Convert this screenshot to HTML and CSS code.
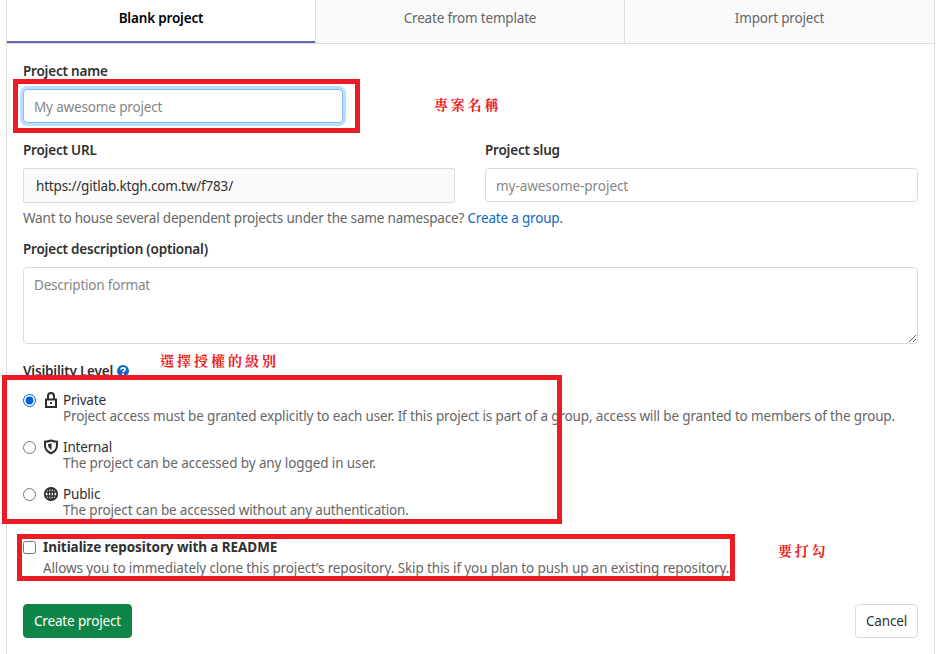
FILE: index.html
```html
<!DOCTYPE html>
<html lang="en">
<head>
<meta charset="utf-8">
<title>New project</title>
<link rel="stylesheet" href="styles.css">
</head>
<body>
<main class="panel">
  <nav class="tabs">
    <a class="tab active"><span class="t-blank">Blank project</span></a>
    <a class="tab"><span class="t-template">Create from template</span></a>
    <a class="tab"><span class="t-import">Import project</span></a>
  </nav>
  <form class="form">
    <label class="label" for="name">Project name</label>
    <input class="input name focused" id="name" type="text" placeholder="My awesome project">
    <div class="columns">
      <div>
        <label class="label">Project URL</label>
        <div class="input url"><span>https://gitlab.ktgh.com.tw/f783/</span></div>
      </div>
      <div>
        <label class="label" for="slug">Project slug</label>
        <input class="input slug" id="slug" type="text" placeholder="my-awesome-project">
      </div>
    </div>
    <p class="help"><span>Want to house several dependent projects under the same namespace? <a class="link">Create a group.</a></span></p>
    <label class="label" for="desc"><span class="l-desc">Project description (optional)</span></label>
    <textarea class="input textarea" id="desc" placeholder="Description format"></textarea>
    <div class="label visibility"><span>Visibility Level</span>
      <svg class="question" viewBox="0 0 16 16"><circle cx="8" cy="8" r="8" fill="#1068bf"/><path d="M5.200 6.200C5.300 4.600 6.500 3.800 8.100 3.800c1.600 0 2.700.8 2.700 2.100C10.800 7.500 8.200 7.500 8.100 9.700" fill="none" stroke="#fff" stroke-width="2.200"/><circle cx="8.100" cy="12.300" r="1.300" fill="#fff"/></svg>
    </div>
    <div class="option">
      <input class="radio" type="radio" name="level" checked>
      <svg class="icon" viewBox="0 0 16 16"><path d="M5 7V4a3 3 0 0 1 6 0v3M3 7.500h10V15H3z" fill="none" stroke="#2e2e2e" stroke-width="2"/><path d="M7 10h2v2H7z" fill="#2e2e2e"/></svg>
      <div class="text"><div class="title">Private</div><div class="note n-private">Project access must be granted explicitly to each user. If this project is part of a group, access will be granted to members of the group.</div></div>
    </div>
    <div class="option">
      <input class="radio" type="radio" name="level">
      <svg class="icon" viewBox="0 0 16 16"><path d="M8 1.500C6 2.300 4 2.700 2 2.700v3.800c0 3.700 2.500 6.200 6 7.900 3.500-1.700 6-4.200 6-7.900V2.700c-2 0-4-.4-6-1.200z" fill="none" stroke="#2e2e2e" stroke-width="2"/><path d="M8.500 4v7C6.500 9.800 5 8.300 5 5.300 6.300 5.100 7.500 4.600 8.500 4z" fill="#2e2e2e"/></svg>
      <div class="text"><div class="title">Internal</div><div class="note n-internal">The project can be accessed by any logged in user.</div></div>
    </div>
    <div class="option">
      <input class="radio" type="radio" name="level">
      <svg class="icon" viewBox="0 0 16 16"><g fill="none" stroke="#2e2e2e" stroke-width="1.500"><circle cx="8" cy="8" r="6.200" stroke-width="1.800"/><ellipse cx="8" cy="8" rx="2.800" ry="6.200"/><path d="M2 6h12M2 10h12M8 2v12"/></g></svg>
      <div class="text"><div class="title">Public</div><div class="note n-public">The project can be accessed without any authentication.</div></div>
    </div>
    <div class="readme">
      <input class="check" type="checkbox">
      <div><div class="readme-title"><span>Initialize repository with a README</span></div><div class="readme-note"><span>Allows you to immediately clone this project’s repository. Skip this if you plan to push up an existing repository.</span></div></div>
    </div>
    <div class="actions">
      <button class="button create" type="button">Create project</button>
      <button class="button cancel" type="button">Cancel</button>
    </div>
  </form>
</main>
<div class="box box-name"></div>
<div class="box box-level"></div>
<div class="box box-readme"></div>
<div class="mark mark-name">專案名稱</div>
<div class="mark mark-level">選擇授權的級別</div>
<div class="mark mark-readme">要打勾</div>
</body>
</html>
```
FILE: styles.css
```css
* { box-sizing: border-box; }
body {
  margin: 0;
  height: 654px;
  overflow: hidden;
  position: relative;
  background: #fff;
  color: #303030;
  font: 13.5px/20px "Noto Sans", sans-serif;
  letter-spacing: -0.18px;
}
.panel {
  margin: 0 2px 0 6px;
  height: 654px;
  border: solid #dbdbdb;
  border-width: 0 1px;
}
.tabs {
  display: grid;
  grid-template-columns: 308px 309px 1fr;
  height: 44px;
  border-bottom: 1px solid #dbdbdb;
}
.tab {
  padding-top: 8px;
  text-align: center;
  color: #666;
  background: #fafafa;
  border-left: 1px solid #dbdbdb;
}
.tab.active {
  color: #000;
  font-weight: 600;
  background: #fff;
  border-left: 0;
  border-bottom: 2px solid #6666c4;
}
.form { padding: 17px 16px 0; }
.label { display: block; height: 20px; font-weight: 600; letter-spacing: -0.2px; white-space: nowrap; }
.input {
  display: block;
  width: 100%;
  height: 34px;
  margin: 8px 0 0;
  padding: 2px 10px 0;
  border: 1px solid #dbdbdb;
  border-radius: 4px;
  background: #fff;
  color: #303030;
  font: inherit;
  letter-spacing: -0.15px;
  outline: 0;
}
.input::placeholder { color: #868686; opacity: 1; }
.name { width: 320px; }
.slug { letter-spacing: -0.05px; }
.focused { border-color: #80bdff; box-shadow: 0 0 0 3px #bfdeff; }
.columns { display: grid; grid-template-columns: 432px 433px; column-gap: 30px; margin-top: 17px; }
.input.url { height: 35px; padding: 7px 12px; border-radius: 2px; background: #fafafa; letter-spacing: -0.18px; }
.help { margin: 5px 0 11px; color: #666; white-space: nowrap; }
.link { color: #1068bf; }
.textarea { height: 77px; padding: 7px 10px; letter-spacing: -0.2px; resize: vertical; }
.visibility { display: flex; align-items: center; gap: 4px; margin-top: 17px; }
.question { width: 12px; height: 12px; }
.option { display: flex; height: 32px; margin-bottom: 15px; line-height: 16px; }
.visibility + .option { margin-top: 11px; }
.radio { width: 13px; height: 13px; margin: 2px 7px 0 0; accent-color: #0060d0; }
.icon { flex: none; width: 16px; height: 16px; margin-right: 4px; }
.text { white-space: nowrap; }
.note, .readme-note { color: #666; }
.n-private { letter-spacing: -0.145px; }
.n-internal { letter-spacing: -0.1px; }
.n-public { letter-spacing: -0.17px; }
.readme { display: flex; margin-top: 21px; line-height: 16px; white-space: nowrap; }
.check { width: 13px; height: 13px; margin: 2px 7px 0 0; }
.readme-title { font-weight: 700; letter-spacing: -0.07px; }
.readme-note { margin-top: 5px; letter-spacing: -0.12px; }
.actions { display: flex; justify-content: space-between; margin-top: 28px; }
.button { height: 34px; padding: 0; border-radius: 4px; font: inherit; letter-spacing: -0.15px; }
.create { width: 109px; border: 1px solid #168043; background: #108548; color: #fff; }
.cancel { width: 63px; border: 1px solid #dbdbdb; background: #fff; color: #303030; }
.box { position: absolute; border: 5px solid #ed1c24; }
.box-name { left: 13px; top: 79px; width: 347px; height: 54px; }
.box-level { left: 2px; top: 375px; width: 560px; height: 149px; }
.box-readme { left: 17px; top: 534px; width: 718px; height: 47px; }
.mark {
  position: absolute;
  color: #ed1c24;
  font: 700 14px/20px "Noto Serif CJK TC", "Noto Sans CJK TC", serif;
  letter-spacing: 2.8px;
  white-space: nowrap;
}
.mark-name { left: 434px; top: 94px; }
.mark-level { left: 160px; top: 350px; letter-spacing: 3px; }
.mark-readme { left: 778px; top: 540px; }
```
